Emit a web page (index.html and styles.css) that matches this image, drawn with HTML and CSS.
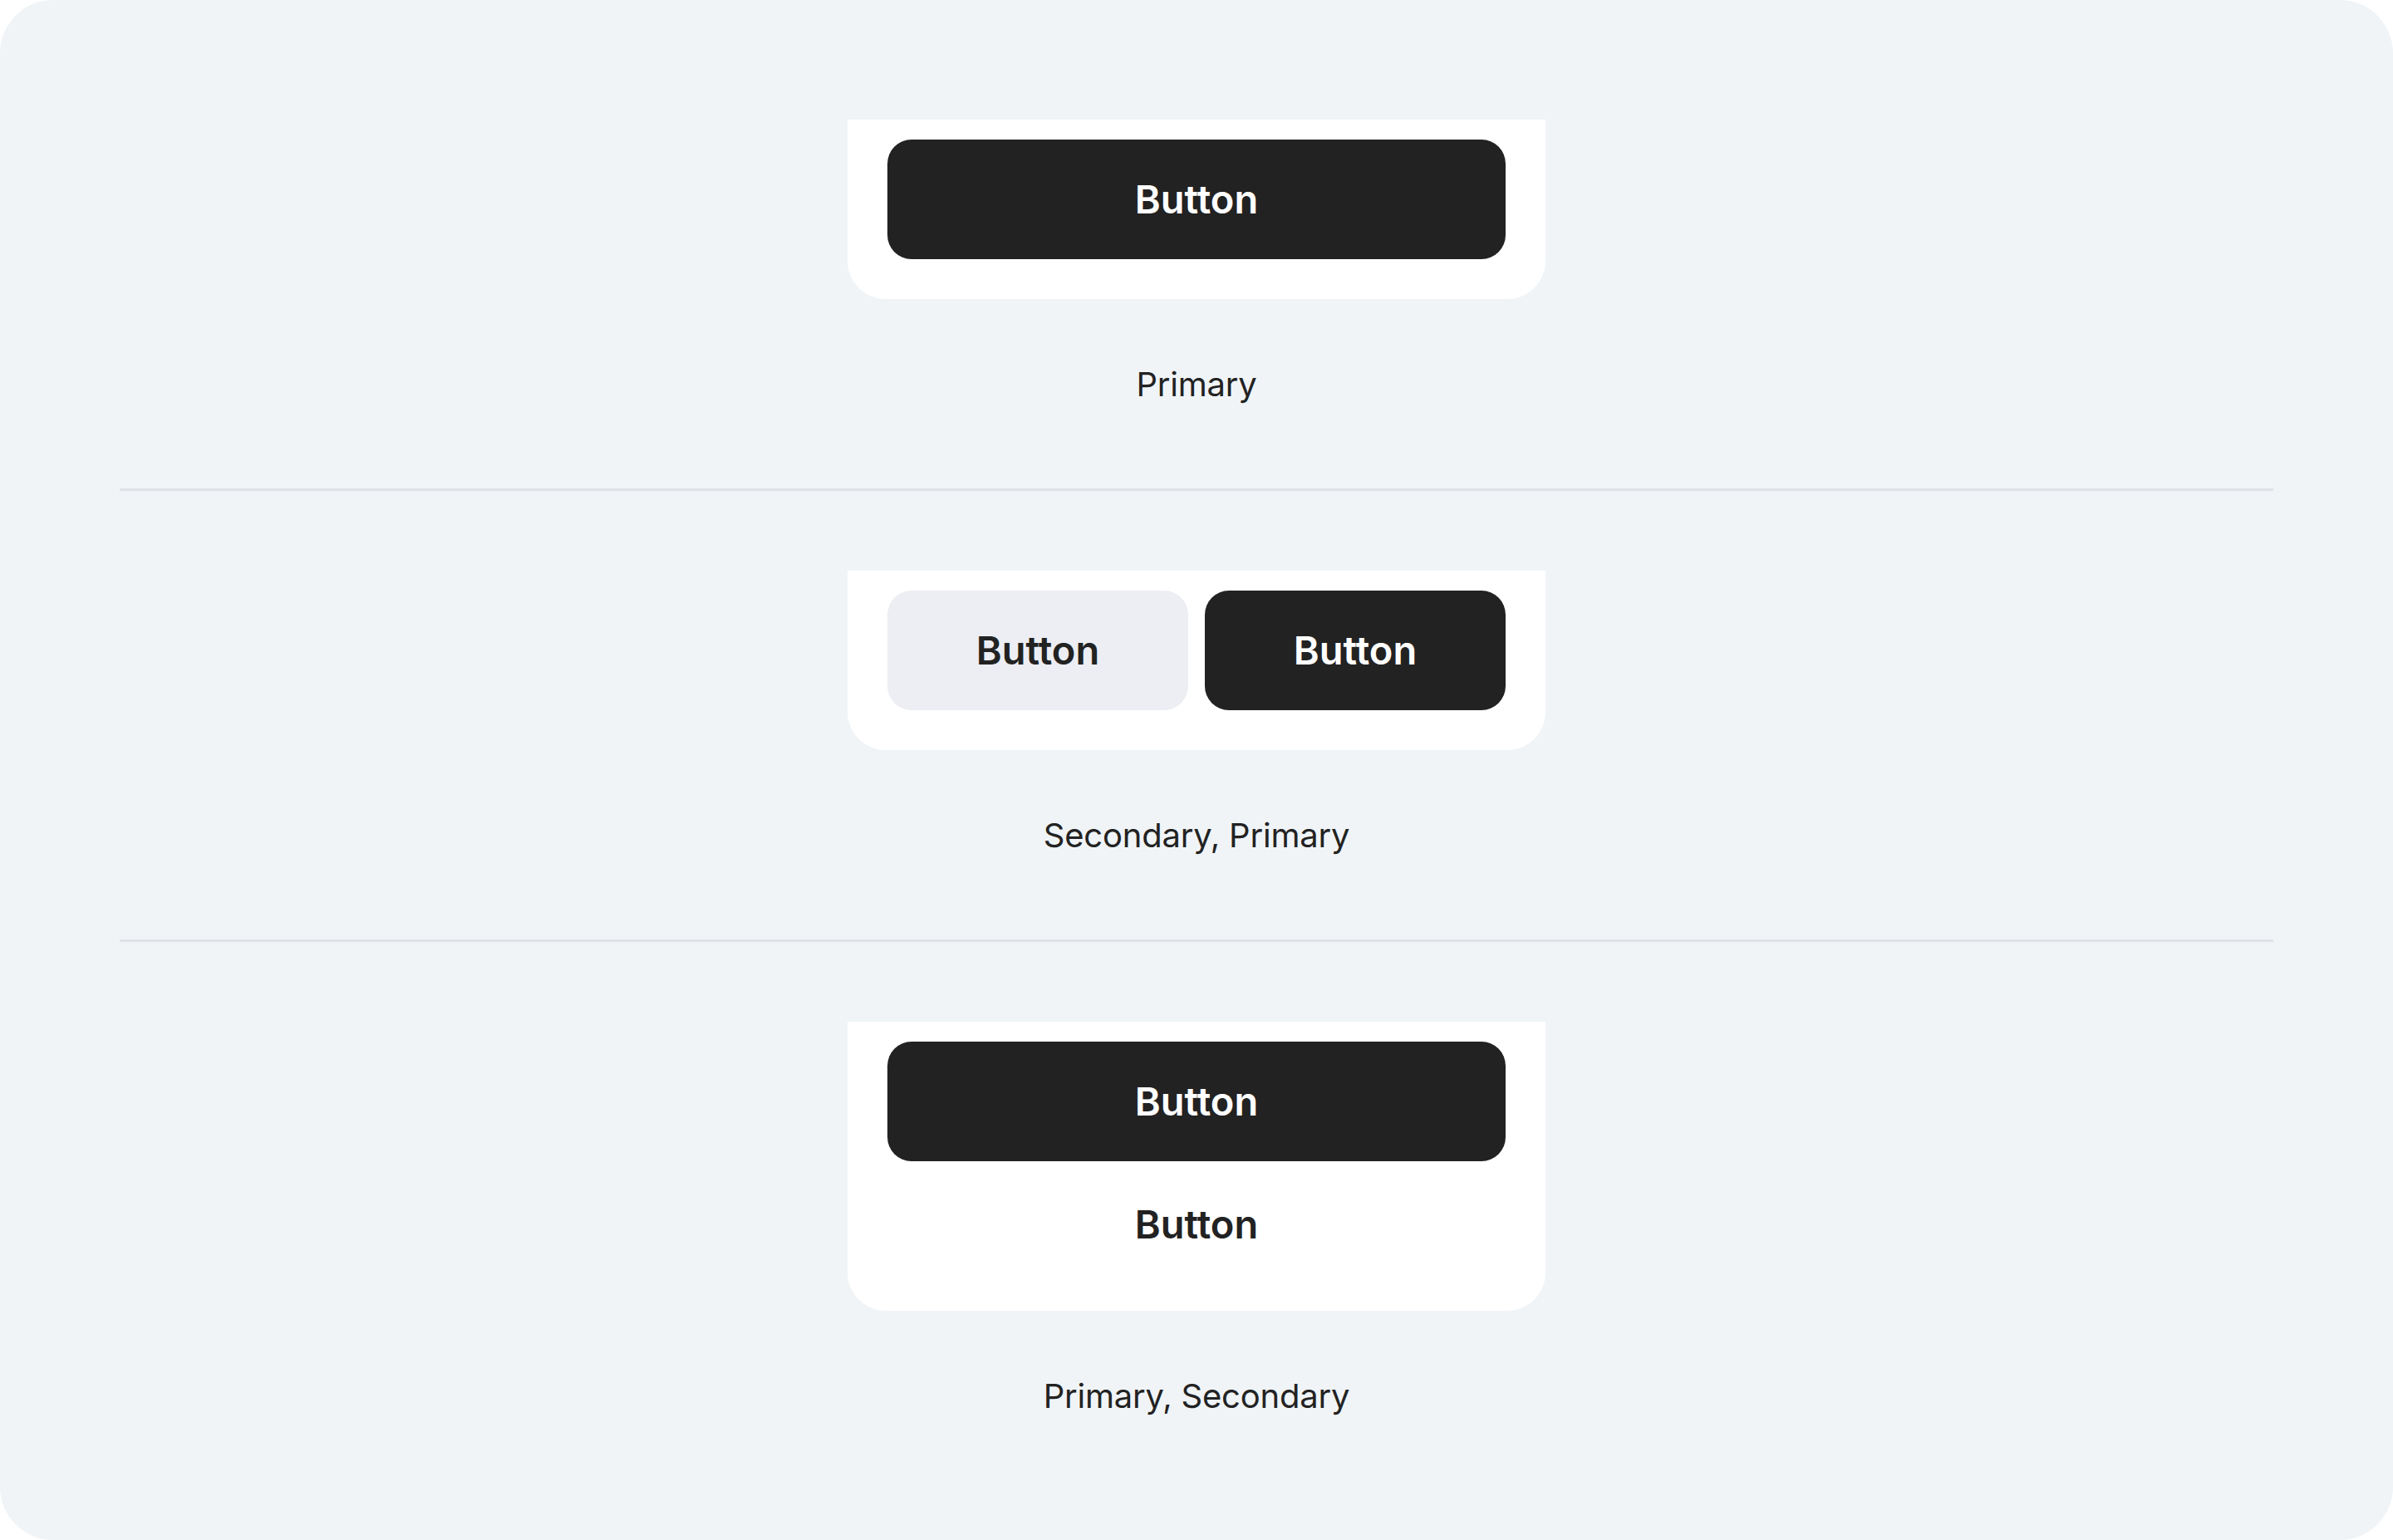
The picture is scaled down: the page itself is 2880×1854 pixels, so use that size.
FILE: index.html
```html
<!DOCTYPE html>
<html lang="en">
<head>
<meta charset="utf-8">
<title>Button groups</title>
<link rel="stylesheet" href="styles.css">
</head>
<body>
<main class="canvas">
  <section class="section">
    <div class="card">
      <div class="btn btn-primary">Button</div>
    </div>
    <p class="label">Primary</p>
  </section>
  <section class="section">
    <div class="card card-row">
      <div class="btn btn-secondary">Button</div>
      <div class="btn btn-primary">Button</div>
    </div>
    <p class="label">Secondary, Primary</p>
  </section>
  <section class="section section-last">
    <div class="card card-stack">
      <div class="btn btn-primary">Button</div>
      <div class="btn btn-ghost">Button</div>
    </div>
    <p class="label">Primary, Secondary</p>
  </section>
</main>
</body>
</html>
```

FILE: styles.css
```css
* { box-sizing: border-box; }
html, body { margin: 0; padding: 0; background: #ffffff; }
body { font-family: Inter, "Noto Sans", "Liberation Sans", sans-serif; color: #222222; }

.canvas {
  width: 2880px;
  height: 1854px;
  background: #f0f4f7;
  border-radius: 64px;
  padding: 144px 144px 0;
  display: flex;
  flex-direction: column;
}

.section {
  display: flex;
  flex-direction: column;
  align-items: center;
  padding: 96px 0 101px;
  border-bottom: 3px solid #dfe3e8;
}
.section:first-child { padding-top: 0; }
.section-last { border-bottom: none; padding-bottom: 0; }

.card {
  width: 840px;
  background: #ffffff;
  border-radius: 0 0 46px 46px;
  padding: 24px 48px 48px;
  display: flex;
  flex-direction: column;
}
.card-row { flex-direction: row; gap: 20px; }
.card-row .btn { flex: 1; }
.card-stack { padding-bottom: 32px; gap: 4px; }

.btn {
  height: 144px;
  line-height: 144px;
  border-radius: 29px;
  text-align: center;
  font-size: 47px;
  font-weight: 600;
  white-space: nowrap;
}
.btn-primary { background: #222222; color: #ffffff; }
.btn-secondary { background: #eceef3; color: #222222; }
.btn-ghost { background: transparent; color: #222222; }

.label {
  margin: 79px 0 0;
  font-size: 40px;
  line-height: 48px;
  letter-spacing: -0.2px;
  font-weight: 400;
  color: #222222;
}
```
